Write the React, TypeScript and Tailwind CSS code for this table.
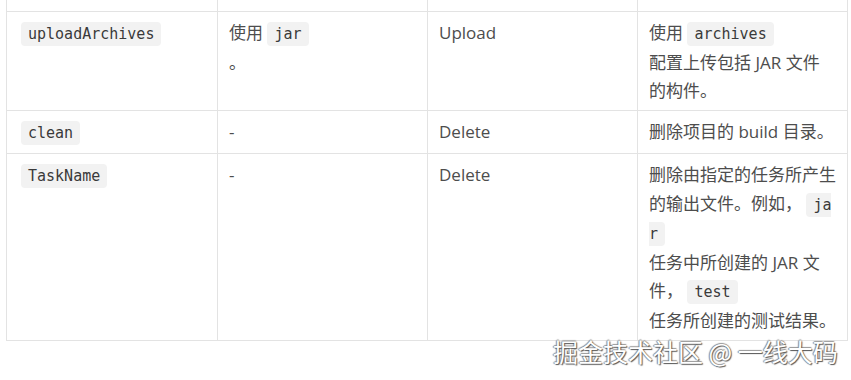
const cell = "border-r border-b border-[#e3e3e3] px-[11px] pt-[7px] leading-[28.5px]";

function Code({ children }: { children: React.ReactNode }) {
  return (
    <code className="rounded-[4px] bg-[#f2f2f2] px-[7px] py-[3px] font-['DejaVu_Sans_Mono','Liberation_Mono',monospace] text-[15px] text-[#3a3a3a]">
      {children}
    </code>
  );
}

export default function App() {
  return (
    <div className="relative h-[380px] w-[851px] overflow-hidden bg-white font-['Open_Sans','Noto_Sans_CJK_SC',sans-serif] text-[17px] text-[#4d4d4d]">
      <div className="ml-[6px] grid grid-cols-[211px_210px_210px_210px] grid-rows-[12px_99px_43px_187px] border-l border-[#e3e3e3]">
        <div className="border-r border-b border-[#e3e3e3]" />
        <div className="border-r border-b border-[#e3e3e3]" />
        <div className="border-r border-b border-[#e3e3e3]" />
        <div className="border-r border-b border-[#e3e3e3]" />

        <div className={`${cell} pt-[6px]`}>
          <span className="ml-[3px]">
            <Code>uploadArchives</Code>
          </span>
        </div>
        <div className={`${cell} pt-[6px]`}>
          使用 <Code>jar</Code>
          <br />。
        </div>
        <div className={`${cell} pt-[6px]`}>Upload</div>
        <div className={`${cell} pt-[6px]`}>
          使用 <Code>archives</Code>
          <br />
          配置上传包括 JAR 文件
          <br />
          的构件。
        </div>

        <div className={cell}>
          <span className="ml-[3px]">
            <Code>clean</Code>
          </span>
        </div>
        <div className={cell}>-</div>
        <div className={cell}>Delete</div>
        <div className={cell}>删除项目的 build 目录。</div>

        <div className={cell}>
          <span className="ml-[3px]">
            <Code>TaskName</Code>
          </span>
        </div>
        <div className={cell}>-</div>
        <div className={cell}>Delete</div>
        <div className={`${cell} whitespace-nowrap`}>
          删除由指定的任务所产生
          <br />
          的输出文件。例如，{" "}
          <Code>
            ja
            <br />r
          </Code>
          <br />
          任务中所创建的 JAR 文
          <br />
          件， <Code>test</Code>
          <br />
          任务所创建的测试结果。
        </div>
      </div>

      <div className="absolute left-[553px] top-[334px] whitespace-nowrap font-['Noto_Sans_CJK_SC',sans-serif] text-[25px] leading-[34px] text-white [text-shadow:1px_1px_1px_#555,-1px_0_1px_#888,0_-1px_1px_#999]">
        掘金技术社区 @ 一线大码
      </div>
    </div>
  );
}
